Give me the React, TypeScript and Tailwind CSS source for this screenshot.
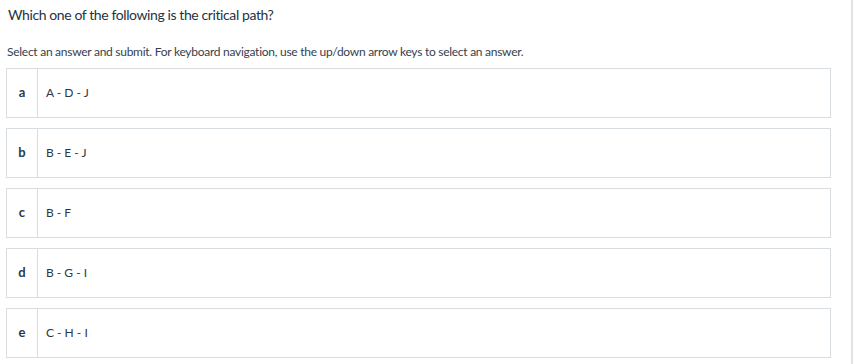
const options = [
  { key: 'a', label: 'A - D - J' },
  { key: 'b', label: 'B - E - J' },
  { key: 'c', label: 'B - F' },
  { key: 'd', label: 'B - G - I' },
  { key: 'e', label: 'C - H - I' },
];

export default function App() {
  return (
    <div className="flex h-[364px] w-[853px] bg-white font-['Lato',sans-serif]">
      <div className="flex-1 pl-[6px] pr-[20px]">
        <h1 className="mt-[6px] pl-[2px] text-[14px] leading-[18px] tracking-[-0.4px] text-[#243342]">
          Which one of the following is the critical path?
        </h1>
        <p className="mt-[20px] pl-[1px] text-[12px] leading-[15px] tracking-[-0.27px] text-[#34424f]">
          Select an answer and submit. For keyboard navigation, use the up/down arrow keys to select an answer.
        </p>
        <ul className="mt-[9px] flex flex-col gap-[10px]">
          {options.map((o) => (
            <li key={o.key} className="flex h-[50px] border border-[#d8dde2] bg-white">
              <div className="flex w-[31px] items-center justify-center border-r border-[#d8dde2] text-[13px] font-bold text-[#2b3946]">
                {o.key}
              </div>
              <div className="flex items-center pl-[8px] text-[12px] text-[#2b3946]">{o.label}</div>
            </li>
          ))}
        </ul>
      </div>
      <div className="w-[2px] bg-[#e3e3e3]" />
    </div>
  );
}
